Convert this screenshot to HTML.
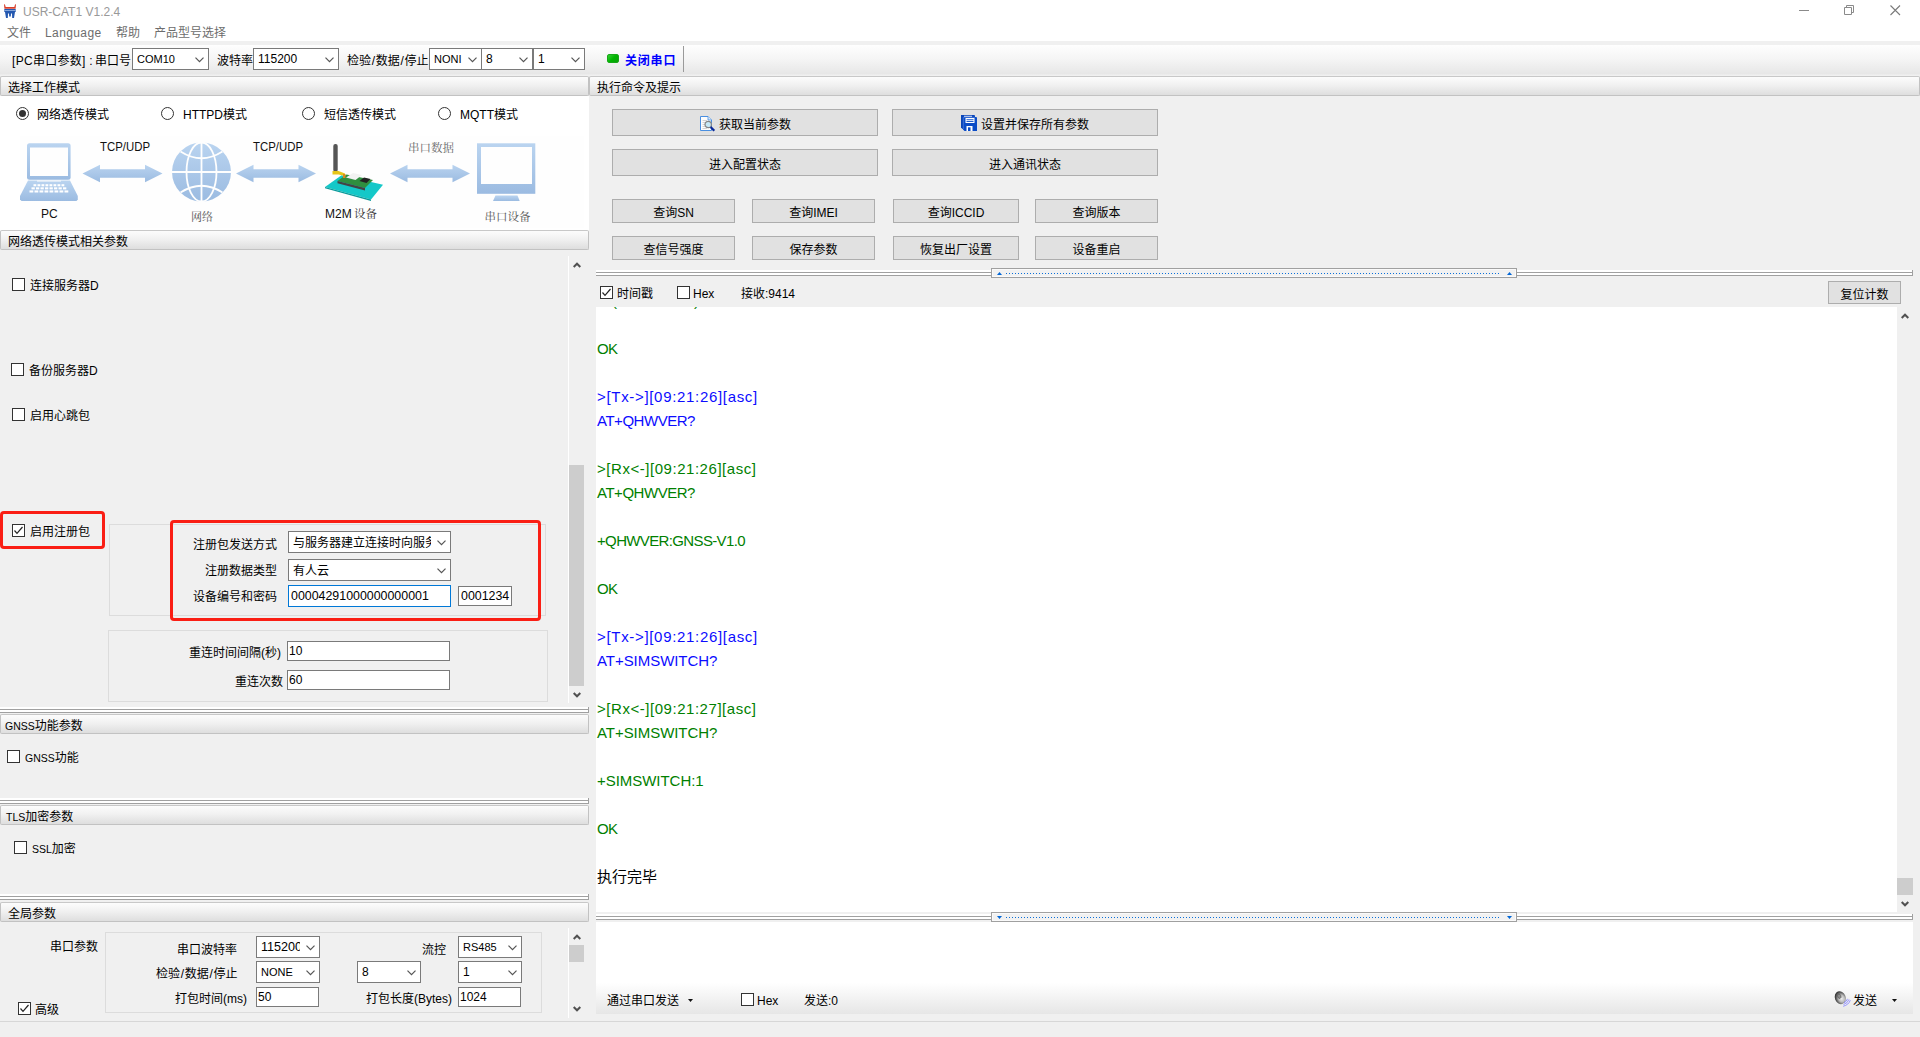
<!DOCTYPE html>
<html lang="zh-CN">
<head>
<meta charset="utf-8">
<title>USR-CAT1 V1.2.4</title>
<style>
*{box-sizing:border-box;margin:0;padding:0}
html,body{width:1920px;height:1037px;overflow:hidden;background:#f0f0f0}
body{position:relative;font-family:"Liberation Sans","Noto Sans CJK SC",sans-serif;font-size:12px;color:#000;line-height:14px}
.l{font-size:11px}
.d{font-size:12.5px}
.a{position:absolute;white-space:nowrap}
.t{position:absolute;white-space:nowrap;height:14px;line-height:14px}
.hdr{position:absolute;height:20px;border:1px solid #c2c2c2;border-top-color:#c8c8c8;border-radius:2px;background:linear-gradient(#fcfcfc,#f1f1f1 45%,#dedede);line-height:21px;padding-top:1px;white-space:nowrap;overflow:hidden}
.dbl{position:absolute;height:6px;border-right:1px solid #a0a0a0;background:linear-gradient(#fff 0,#fff 2px,#a0a0a0 2px,#a0a0a0 3px,#fff 3px,#fff 5px,#a0a0a0 5px,#a0a0a0 6px)}
.cb{position:absolute;width:13px;height:13px;border:1px solid #333;background:#fff}
.cb svg{position:absolute;left:0;top:0}
.rd{position:absolute;width:13px;height:13px;border:1px solid #333;border-radius:50%;background:#fff}
.rd.on:after{content:"";position:absolute;left:2px;top:2px;width:7px;height:7px;border-radius:50%;background:#333}
.sel{position:absolute;border:1px solid #7a7a7a;background:#fff;padding-left:4px;white-space:nowrap;overflow:hidden}
.sel svg{position:absolute;right:4px;top:8px}
.st{display:block;overflow:hidden;margin-right:19px;height:100%}
.inp{position:absolute;border:1px solid #7a7a7a;background:#fff;padding-left:2px;white-space:nowrap;overflow:hidden}
.btn{position:absolute;border:1px solid #adadad;background:#e1e1e1;text-align:center;white-space:nowrap}
.grp{position:absolute;border:1px solid #dcdcdc}
.log{position:absolute;left:597px;font-size:15px;line-height:24px;height:24px;white-space:nowrap}
.b{color:#0c0cff}.g{color:#008000}
</style>
</head>
<body>
<div class="a" style="left:0px;top:0px;width:1920px;height:41px;background:#fff"></div>
<svg class="a" style="left:4px;top:4px" width="12" height="14" viewBox="0 0 12 14"><path d="M0 0Q1.200 0 1.700 3H10.300Q10.800 0 12 0L11.600 4.700H0.400Z" fill="#d8402c"/><path d="M0.300 5H11.700V8H11L10 14H8.200L8 9.500H7L6.800 12.500H5.200L5 9.500H4L3.800 14H2L1 8H0.300Z" fill="#2458b0"/><rect x="0.500" y="6.200" width="11" height="0.800" fill="#9dbbe6"/></svg>
<div class="t" style="left:23px;top:5px;color:#999">USR-CAT1 V1.2.4</div>
<svg class="a" style="left:1799px;top:5px" width="102" height="11" viewBox="0 0 102 11" fill="none" stroke="#8a8a8a" stroke-width="1"><path d="M0 5.500H10"/><path d="M45.500 2.500H52.500V9.500H45.500Z M47.500 2.500V0.500H54.500V7.500H52.500"/><path d="M91.500 0.500L101 10M101 0.500L91.500 10" stroke="#7a7a7a" stroke-width="1.100"/></svg>
<div class="t" style="left:7px;top:26px;color:#6d6d6d">文件</div>
<div class="t" style="left:45px;top:26px;color:#6d6d6d;letter-spacing:0.4px">Language</div>
<div class="t" style="left:116px;top:26px;color:#6d6d6d">帮助</div>
<div class="t" style="left:154px;top:26px;color:#6d6d6d">产品型号选择</div>
<div class="a" style="left:0px;top:45px;width:1920px;height:31px;background:linear-gradient(#fefefe,#f5f5f5 45%,#e7e7e7 92%,#f2f2f2)"></div>
<div class="t" style="left:12px;top:54px;letter-spacing:0.3px">[PC串口参数] :</div>
<div class="t" style="left:95px;top:54px;">串口号</div>
<div class="sel" style="left:132px;top:48px;width:77px;height:22px;line-height:20px"><span class="st"><span style="font-size:11px">COM10</span></span><svg width="9" height="6" viewBox="0 0 9 6"><path d="M0.5 0.700L4.500 4.700L8.500 0.700" fill="none" stroke="#555" stroke-width="1.200"/></svg></div>
<div class="t" style="left:217px;top:54px;">波特率</div>
<div class="sel" style="left:253px;top:48px;width:86px;height:22px;line-height:20px"><span class="st">115200</span><svg width="9" height="6" viewBox="0 0 9 6"><path d="M0.5 0.700L4.500 4.700L8.500 0.700" fill="none" stroke="#555" stroke-width="1.200"/></svg></div>
<div class="t" style="left:347px;top:54px;">检验<span style="padding:0 0.7px">/</span>数据<span style="padding:0 0.7px">/</span>停止</div>
<div class="sel" style="left:429px;top:48px;width:53px;height:22px;line-height:20px"><span class="st"><span style="font-size:11px">NONI</span></span><svg width="9" height="6" viewBox="0 0 9 6"><path d="M0.5 0.700L4.500 4.700L8.500 0.700" fill="none" stroke="#555" stroke-width="1.200"/></svg></div>
<div class="sel" style="left:481px;top:48px;width:52px;height:22px;line-height:20px"><span class="st">8</span><svg width="9" height="6" viewBox="0 0 9 6"><path d="M0.5 0.700L4.500 4.700L8.500 0.700" fill="none" stroke="#555" stroke-width="1.200"/></svg></div>
<div class="sel" style="left:533px;top:48px;width:52px;height:22px;line-height:20px"><span class="st">1</span><svg width="9" height="6" viewBox="0 0 9 6"><path d="M0.5 0.700L4.500 4.700L8.500 0.700" fill="none" stroke="#555" stroke-width="1.200"/></svg></div>
<div class="a" style="left:607px;top:54px;width:12px;height:9px;border-radius:2px;background:linear-gradient(135deg,#35d035,#00b400 50%,#0aa00a);border:1px solid #18a818"></div>
<div class="t" style="left:625px;top:54px;color:#0000ff;font-weight:bold;letter-spacing:0.8px">关闭串口</div>
<div class="a" style="left:683px;top:46px;width:1px;height:26px;background:#9a9a9a"></div>
<div class="a" style="left:0px;top:96px;width:589px;height:135px;background:#fff"></div>
<div class="hdr" style="left:0px;top:76px;width:589px;padding-left:7px">选择工作模式</div>
<div class="rd on" style="left:16px;top:107px"></div>
<div class="t" style="left:37px;top:108px;">网络透传模式</div>
<div class="rd" style="left:161px;top:107px"></div>
<div class="t" style="left:183px;top:108px;">HTTPD模式</div>
<div class="rd" style="left:302px;top:107px"></div>
<div class="t" style="left:324px;top:108px;">短信透传模式</div>
<div class="rd" style="left:438px;top:107px"></div>
<div class="t" style="left:460px;top:108px;">MQTT模式</div>
<svg class="a" style="left:20px;top:136px" width="564" height="92" viewBox="20 136 564 92">
<defs><linearGradient id="gb" x1="0" y1="0" x2="0" y2="1"><stop offset="0" stop-color="#bad4f0"/><stop offset="1" stop-color="#9bbbe1"/></linearGradient></defs>
<rect x="20" y="136" width="564" height="92" fill="#fefefe"/>
<rect x="27" y="143.300" width="43.600" height="36.400" rx="2.500" fill="url(#gb)"/>
<rect x="30" y="147.500" width="38" height="28.500" fill="#fefefe"/>
<path d="M28 180.500H70L77.800 196V199.500L76.500 201H21.500L20 199.500V196Z" fill="url(#gb)"/>
<rect x="37" y="180.500" width="24" height="1" fill="#fefefe"/>
<rect x="33.5" y="184.2" width="2.8" height="2.100" fill="#fff"/><rect x="37.5" y="184.2" width="2.8" height="2.100" fill="#fff"/><rect x="41.5" y="184.2" width="2.8" height="2.100" fill="#fff"/><rect x="45.5" y="184.2" width="2.8" height="2.100" fill="#fff"/><rect x="49.5" y="184.2" width="2.8" height="2.100" fill="#fff"/><rect x="53.5" y="184.2" width="2.8" height="2.100" fill="#fff"/><rect x="57.5" y="184.2" width="2.8" height="2.100" fill="#fff"/><rect x="61.5" y="184.2" width="2.8" height="2.100" fill="#fff"/><rect x="31.5" y="187.3" width="3.3" height="2.100" fill="#fff"/><rect x="36.0" y="187.3" width="3.3" height="2.100" fill="#fff"/><rect x="40.5" y="187.3" width="3.3" height="2.100" fill="#fff"/><rect x="45.0" y="187.3" width="3.3" height="2.100" fill="#fff"/><rect x="49.5" y="187.3" width="3.3" height="2.100" fill="#fff"/><rect x="54.0" y="187.3" width="3.3" height="2.100" fill="#fff"/><rect x="58.5" y="187.3" width="3.3" height="2.100" fill="#fff"/><rect x="63.0" y="187.3" width="3.3" height="2.100" fill="#fff"/><rect x="29.5" y="190.4" width="3.8" height="2.100" fill="#fff"/><rect x="34.5" y="190.4" width="3.8" height="2.100" fill="#fff"/><rect x="39.5" y="190.4" width="3.8" height="2.100" fill="#fff"/><rect x="44.5" y="190.4" width="3.8" height="2.100" fill="#fff"/><rect x="49.5" y="190.4" width="3.8" height="2.100" fill="#fff"/><rect x="54.5" y="190.4" width="3.8" height="2.100" fill="#fff"/><rect x="59.5" y="190.4" width="3.8" height="2.100" fill="#fff"/><rect x="64.5" y="190.4" width="3.8" height="2.100" fill="#fff"/>
<text x="41" y="217.500" font-family="Liberation Sans, sans-serif" font-size="12" fill="#111">PC</text>
<text x="100" y="151" font-family="Liberation Sans, sans-serif" font-size="12" fill="#111" textLength="50" lengthAdjust="spacingAndGlyphs">TCP/UDP</text>
<path d="M82.5 173.5L100.0 164.7V169.2H145.0V164.7L162.5 173.5L145.0 182.3V177.8H100.0V182.3Z" fill="url(#gb)"/>
<circle cx="201.500" cy="172" r="29.500" fill="url(#gb)"/>
<g fill="none" stroke="#fefefe" stroke-width="1.800">
<path d="M201.500 142V202M171.500 172H231.500"/>
<ellipse cx="201.500" cy="172" rx="15" ry="29.500"/>
<path d="M180.500 151.500Q201.500 165 222.500 151.500M180.500 192.500Q201.500 179 222.500 192.500"/>
</g>
<text x="191" y="221" font-family="Noto Serif CJK SC, serif" font-size="11" fill="#555">网络</text>
<text x="253" y="151" font-family="Liberation Sans, sans-serif" font-size="12" fill="#111" textLength="50" lengthAdjust="spacingAndGlyphs">TCP/UDP</text>
<path d="M236 173.5L253.5 164.7V169.2H298.5V164.7L316 173.5L298.5 182.3V177.8H253.5V182.3Z" fill="url(#gb)"/>
<path d="M325 187L341.500 175.300L383 184.700L371 199.500Z" fill="#14c8c8"/>
<path d="M325 187L371 199.500L371 201L325 188.300Z" fill="#0b9a9a"/>
<path d="M337.500 181L346.500 174.500L373 180L365 188Z" fill="#2f8f3f"/>
<path d="M337.500 181L365 188V190.500L337.500 183.300Z" fill="#444"/>
<path d="M346 177.500L353 173L362 175L355.500 180Z" fill="#f2f2f2"/>
<path d="M359.500 181L364 177.500L370.500 179L366.500 183Z" fill="#222"/>
<rect x="333.300" y="144" width="4.400" height="28" rx="2" fill="#555"/>
<path d="M332.500 171H338.500L345 173.500V176L338.500 174.500H332.500Z" fill="#e6c619"/>
<rect x="343" y="174" width="2.500" height="4" fill="#d98a1d"/>
<text x="325" y="217.500" font-family="Liberation Sans, sans-serif" font-size="12" fill="#111">M2M</text>
<text x="354" y="217.500" font-family="Noto Serif CJK SC, serif" font-size="11.500" fill="#333">设备</text>
<text x="408" y="151.700" font-family="Noto Serif CJK SC, serif" font-size="11.500" fill="#666">串口数据</text>
<path d="M390 173.5L407.5 164.7V169.2H452.5V164.7L470 173.5L452.5 182.3V177.8H407.5V182.3Z" fill="url(#gb)"/>
<rect x="477" y="143.300" width="58.300" height="50.500" fill="url(#gb)"/>
<rect x="481" y="147" width="51" height="37" fill="#fefefe"/>
<path d="M495.500 195.600H517.500L519.700 201H493Z" fill="url(#gb)"/>
<text x="484.500" y="220.700" font-family="Noto Serif CJK SC, serif" font-size="11.500" fill="#555">串口设备</text>
</svg>
<div class="hdr" style="left:0px;top:230px;width:589px;padding-left:7px">网络透传模式相关参数</div>
<div class="a" style="left:568px;top:256px;width:1px;height:447px;background:#fff"></div>
<div class="a" style="left:569px;top:256px;width:17px;height:447px;background:#f0f0f0"></div>
<svg class="a" style="left:573px;top:262px" width="8" height="6" viewBox="0 0 8 6"><path d="M0.700 5L4 1.700L7.300 5" fill="none" stroke="#505050" stroke-width="2"/></svg>
<svg class="a" style="left:573px;top:692px" width="8" height="6" viewBox="0 0 8 6"><path d="M0.700 1L4 4.300L7.300 1" fill="none" stroke="#505050" stroke-width="2"/></svg>
<div class="a" style="left:569px;top:465px;width:15px;height:221px;background:#cdcdcd"></div>
<div class="cb" style="left:12px;top:278px"></div>
<div class="t" style="left:30px;top:279px;">连接服务器D</div>
<div class="cb" style="left:11px;top:363px"></div>
<div class="t" style="left:29px;top:364px;">备份服务器D</div>
<div class="cb" style="left:12px;top:408px"></div>
<div class="t" style="left:30px;top:409px;">启用心跳包</div>
<div class="grp" style="left:109px;top:524px;width:437px;height:92px"></div>
<div class="cb" style="left:12px;top:524px"><svg width="11" height="11" viewBox="0 0 11 11"><path d="M1.5 5.500L4 8.300L9.500 2" fill="none" stroke="#222" stroke-width="1.200"/></svg></div>
<div class="t" style="left:30px;top:525px;">启用注册包</div>
<div class="a" style="left:0px;top:511px;width:105px;height:38px;border:3px solid #fa1e14;border-radius:4px"></div>
<div class="a" style="left:170px;top:520px;width:371px;height:101px;border:3px solid #fa1e14;border-radius:4px"></div>
<div class="t" style="left:193px;top:538px;">注册包发送方式</div>
<div class="sel" style="left:288px;top:531px;width:163px;height:22px;line-height:20px"><span class="st"><span style="position:relative;top:1px">与服务器建立连接时向服务</span></span><svg width="9" height="6" viewBox="0 0 9 6"><path d="M0.5 0.700L4.500 4.700L8.500 0.700" fill="none" stroke="#555" stroke-width="1.200"/></svg></div>
<div class="t" style="left:205px;top:564px;">注册数据类型</div>
<div class="sel" style="left:288px;top:559px;width:163px;height:22px;line-height:20px"><span class="st"><span style="position:relative;top:1px">有人云</span></span><svg width="9" height="6" viewBox="0 0 9 6"><path d="M0.5 0.700L4.500 4.700L8.500 0.700" fill="none" stroke="#555" stroke-width="1.200"/></svg></div>
<div class="t" style="left:193px;top:590px;">设备编号和密码</div>
<div class="inp" style="left:288px;top:585px;width:163px;height:22px;line-height:20px;border-color:#0078d7"><span style="font-size:12.4px">00004291000000000001</span></div>
<div class="inp" style="left:458px;top:586px;width:54px;height:20px;line-height:18px;"><span style="font-size:12.4px">0001234</span></div>
<div class="grp" style="left:108px;top:630px;width:440px;height:72px"></div>
<div class="t" style="left:189px;top:646px;">重连时间间隔(秒)</div>
<div class="inp" style="left:287px;top:641px;width:163px;height:20px;line-height:18px;padding-left:1px">10</div>
<div class="t" style="left:235px;top:675px;">重连次数</div>
<div class="inp" style="left:287px;top:670px;width:163px;height:20px;line-height:18px;padding-left:1px">60</div>
<div class="dbl" style="left:0;top:707px;width:589px"></div>
<div class="hdr" style="left:0px;top:714px;width:589px;padding-left:4px"><span style="font-size:10.5px">GNSS</span>功能参数</div>
<div class="cb" style="left:7px;top:750px"></div>
<div class="t" style="left:25px;top:751px;"><span style="font-size:10.5px">GNSS</span>功能</div>
<div class="dbl" style="left:0;top:798px;width:589px"></div>
<div class="hdr" style="left:0px;top:805px;width:589px;padding-left:5px"><span style="font-size:10.5px">TLS</span>加密参数</div>
<div class="cb" style="left:14px;top:841px"></div>
<div class="t" style="left:32px;top:842px;"><span style="font-size:10.5px">SSL</span>加密</div>
<div class="dbl" style="left:0;top:894px;width:589px"></div>
<div class="hdr" style="left:0px;top:902px;width:589px;padding-left:7px">全局参数</div>
<div class="t" style="left:50px;top:940px;">串口参数</div>
<div class="grp" style="left:105px;top:932px;width:437px;height:81px"></div>
<div class="t" style="left:177px;top:943px;">串口波特率</div>
<div class="sel" style="left:256px;top:936px;width:64px;height:22px;line-height:20px"><span class="st"><span style="font-size:12.6px">115200</span></span><svg width="9" height="6" viewBox="0 0 9 6"><path d="M0.5 0.700L4.500 4.700L8.500 0.700" fill="none" stroke="#555" stroke-width="1.200"/></svg></div>
<div class="t" style="left:422px;top:943px;">流控</div>
<div class="sel" style="left:458px;top:936px;width:64px;height:22px;line-height:20px"><span class="st"><span style="font-size:11px">RS485</span></span><svg width="9" height="6" viewBox="0 0 9 6"><path d="M0.5 0.700L4.500 4.700L8.500 0.700" fill="none" stroke="#555" stroke-width="1.200"/></svg></div>
<div class="t" style="left:156px;top:967px;">检验<span style="padding:0 0.7px">/</span>数据<span style="padding:0 0.7px">/</span>停止</div>
<div class="sel" style="left:256px;top:961px;width:64px;height:22px;line-height:20px"><span class="st"><span style="font-size:11px">NONE</span></span><svg width="9" height="6" viewBox="0 0 9 6"><path d="M0.5 0.700L4.500 4.700L8.500 0.700" fill="none" stroke="#555" stroke-width="1.200"/></svg></div>
<div class="sel" style="left:357px;top:961px;width:64px;height:22px;line-height:20px"><span class="st">8</span><svg width="9" height="6" viewBox="0 0 9 6"><path d="M0.5 0.700L4.500 4.700L8.500 0.700" fill="none" stroke="#555" stroke-width="1.200"/></svg></div>
<div class="sel" style="left:458px;top:961px;width:64px;height:22px;line-height:20px"><span class="st">1</span><svg width="9" height="6" viewBox="0 0 9 6"><path d="M0.5 0.700L4.500 4.700L8.500 0.700" fill="none" stroke="#555" stroke-width="1.200"/></svg></div>
<div class="t" style="left:175px;top:992px;">打包时间(ms)</div>
<div class="inp" style="left:256px;top:987px;width:63px;height:20px;line-height:18px;padding-left:1px">50</div>
<div class="t" style="left:366px;top:992px;">打包长度(Bytes)</div>
<div class="inp" style="left:458px;top:987px;width:63px;height:20px;line-height:18px;padding-left:1px">1024</div>
<div class="cb" style="left:18px;top:1002px"><svg width="11" height="11" viewBox="0 0 11 11"><path d="M1.5 5.500L4 8.300L9.500 2" fill="none" stroke="#222" stroke-width="1.200"/></svg></div>
<div class="t" style="left:35px;top:1003px;">高级</div>
<div class="a" style="left:568px;top:928px;width:1px;height:90px;background:#fff"></div>
<div class="a" style="left:569px;top:928px;width:17px;height:89px;background:#f0f0f0"></div>
<svg class="a" style="left:573px;top:934px" width="8" height="6" viewBox="0 0 8 6"><path d="M0.700 5L4 1.700L7.300 5" fill="none" stroke="#505050" stroke-width="2"/></svg>
<svg class="a" style="left:573px;top:1006px" width="8" height="6" viewBox="0 0 8 6"><path d="M0.700 1L4 4.300L7.300 1" fill="none" stroke="#505050" stroke-width="2"/></svg>
<div class="a" style="left:569px;top:945px;width:15px;height:17px;background:#cdcdcd"></div>
<div class="a" style="left:0px;top:1021px;width:1920px;height:1px;background:#d7d7d7"></div>
<div class="hdr" style="left:589px;top:76px;width:1331px;padding-left:7px">执行命令及提示</div>
<div class="btn" style="left:612px;top:109px;width:266px;height:27px;line-height:31px;padding-left:20px"><svg style="position:absolute;left:87px;top:6px" width="16" height="16" viewBox="0 0 16 16"><path d="M0.500 0.500H8L11.500 4V14.500H0.500Z" fill="#fdfdfd" stroke="#4a8fe0"/><path d="M8 0.500V4H11.500" fill="#dce9fa" stroke="#4a8fe0" stroke-width="0.800"/><path d="M2.500 4.500H7M2.500 6.500H6M2.500 8.500H5M2.500 10.500H5M2.500 12.500H7" stroke="#c9c9c9" stroke-width="0.800"/><circle cx="8.200" cy="8.500" r="3.200" fill="#c6e9f7" stroke="#858585" stroke-width="1.200"/><path d="M10.600 11L14.300 14.700" stroke="#0a2a9a" stroke-width="2.300"/></svg>获取当前参数</div>
<div class="btn" style="left:892px;top:109px;width:266px;height:27px;line-height:31px;padding-left:20px"><svg style="position:absolute;left:68px;top:5px" width="16" height="16" viewBox="0 0 16 16"><path d="M0 0H13.500L14 0.500V14H1.500L0 12.500Z" fill="#0a45b8"/><rect x="3" y="0.800" width="8" height="0.900" fill="#fff"/><path d="M2 2H15.500L16 2.500V16H3.500L2 14.500Z" fill="#0b4cc6"/><path d="M2.300 14.500V2.300H14" fill="none" stroke="#5d8ae6" stroke-width="0.600"/><rect x="4.500" y="3" width="9" height="5" fill="#fff"/><rect x="5.500" y="4.300" width="7" height="0.900" fill="#0b4cc6"/><rect x="5.500" y="6" width="7" height="0.900" fill="#0b4cc6"/><rect x="5.500" y="11" width="6" height="5" fill="#fff"/><rect x="7" y="12.300" width="2.500" height="3.700" fill="#0b4cc6"/></svg>设置并保存所有参数</div>
<div class="btn" style="left:612px;top:149px;width:266px;height:27px;line-height:31px;padding-left:0px">进入配置状态</div>
<div class="btn" style="left:892px;top:149px;width:266px;height:27px;line-height:31px;padding-left:0px">进入通讯状态</div>
<div class="btn" style="left:612px;top:199px;width:123px;height:24px;line-height:26px;padding-left:0px">查询SN</div>
<div class="btn" style="left:612px;top:236px;width:123px;height:24px;line-height:26px;padding-left:0px">查信号强度</div>
<div class="btn" style="left:752px;top:199px;width:123px;height:24px;line-height:26px;padding-left:0px">查询IMEI</div>
<div class="btn" style="left:752px;top:236px;width:123px;height:24px;line-height:26px;padding-left:0px">保存参数</div>
<div class="btn" style="left:893px;top:199px;width:126px;height:24px;line-height:26px;padding-left:0px">查询ICCID</div>
<div class="btn" style="left:893px;top:236px;width:126px;height:24px;line-height:26px;padding-left:0px">恢复出厂设置</div>
<div class="btn" style="left:1035px;top:199px;width:123px;height:24px;line-height:26px;padding-left:0px">查询版本</div>
<div class="btn" style="left:1035px;top:236px;width:123px;height:24px;line-height:26px;padding-left:0px">设备重启</div>
<div class="dbl" style="left:596px;top:270px;width:1317px"></div>
<div class="a" style="left:991px;top:268px;width:526px;height:10px;border:1px solid #a0a0a0;background:#f1f1f1;box-shadow:inset 0 0 0 1px #fafafa"></div>
<div class="a" style="left:1006px;top:273px;width:493px;height:1px;background:repeating-linear-gradient(90deg,#0a6fd8 0,#0a6fd8 1px,transparent 1px,transparent 3px)"></div>
<svg class="a" style="left:997px;top:272px" width="5" height="3" viewBox="0 0 5 3"><path d="M0 3L2.500 0L5 3Z" fill="#0066d6"/></svg>
<svg class="a" style="left:1507px;top:272px" width="5" height="3" viewBox="0 0 5 3"><path d="M0 3L2.500 0L5 3Z" fill="#0066d6"/></svg>
<div class="cb" style="left:600px;top:286px"><svg width="11" height="11" viewBox="0 0 11 11"><path d="M1.5 5.500L4 8.300L9.500 2" fill="none" stroke="#222" stroke-width="1.200"/></svg></div>
<div class="t" style="left:617px;top:287px;">时间戳</div>
<div class="cb" style="left:677px;top:286px"></div>
<div class="t" style="left:693px;top:287px;">Hex</div>
<div class="t" style="left:741px;top:287px;">接收:9414</div>
<div class="btn" style="left:1828px;top:281px;width:73px;height:23px;line-height:27px;padding-left:0px">复位计数</div>
<div class="a" style="left:596px;top:307px;width:1317px;height:605px;background:#fff"></div>
<div class="a" style="left:596px;top:307px;width:1300px;height:4px;overflow:hidden"><div class="log g" style="left:16px;top:-18px">(</div><div class="log g" style="left:98px;top:-18px">)</div></div>
<div class="a" style="left:1897px;top:307px;width:16px;height:605px;background:#f0f0f0"></div>
<svg class="a" style="left:1901px;top:313px" width="8" height="6" viewBox="0 0 8 6"><path d="M0.700 5L4 1.700L7.300 5" fill="none" stroke="#505050" stroke-width="2"/></svg>
<svg class="a" style="left:1901px;top:901px" width="8" height="6" viewBox="0 0 8 6"><path d="M0.700 1L4 4.300L7.300 1" fill="none" stroke="#505050" stroke-width="2"/></svg>
<div class="a" style="left:1897px;top:878px;width:16px;height:17px;background:#cdcdcd"></div>
<div class="log g" style="top:337px;letter-spacing:-0.65px">OK</div>
<div class="log b" style="top:385px;letter-spacing:0.68px">&gt;[Tx-&gt;][09:21:26][asc]</div>
<div class="log b" style="top:409px;letter-spacing:-0.47px">AT+QHWVER?</div>
<div class="log g" style="top:457px;letter-spacing:0.54px">&gt;[Rx&lt;-][09:21:26][asc]</div>
<div class="log g" style="top:481px;letter-spacing:-0.47px">AT+QHWVER?</div>
<div class="log g" style="top:529px;letter-spacing:-0.64px">+QHWVER:GNSS-V1.0</div>
<div class="log g" style="top:577px;letter-spacing:-0.65px">OK</div>
<div class="log b" style="top:625px;letter-spacing:0.68px">&gt;[Tx-&gt;][09:21:26][asc]</div>
<div class="log b" style="top:649px;letter-spacing:-0.05px">AT+SIMSWITCH?</div>
<div class="log g" style="top:697px;letter-spacing:0.54px">&gt;[Rx&lt;-][09:21:27][asc]</div>
<div class="log g" style="top:721px;letter-spacing:-0.05px">AT+SIMSWITCH?</div>
<div class="log g" style="top:769px;letter-spacing:-0.04px">+SIMSWITCH:1</div>
<div class="log g" style="top:817px;letter-spacing:-0.65px">OK</div>
<div class="log " style="top:865px">执行完毕</div>
<div class="dbl" style="left:596px;top:914px;width:1317px"></div>
<div class="a" style="left:991px;top:912px;width:526px;height:10px;border:1px solid #a0a0a0;background:#f1f1f1;box-shadow:inset 0 0 0 1px #fafafa"></div>
<div class="a" style="left:1006px;top:917px;width:493px;height:1px;background:repeating-linear-gradient(90deg,#0a6fd8 0,#0a6fd8 1px,transparent 1px,transparent 3px)"></div>
<svg class="a" style="left:997px;top:916px" width="5" height="3" viewBox="0 0 5 3"><path d="M0 0H5L2.500 3Z" fill="#0066d6"/></svg>
<svg class="a" style="left:1507px;top:916px" width="5" height="3" viewBox="0 0 5 3"><path d="M0 0H5L2.500 3Z" fill="#0066d6"/></svg>
<div class="a" style="left:596px;top:922px;width:1317px;height:92px;background:linear-gradient(#fff 0,#fff 66%,#e6e6e6 100%)"></div>
<div class="t" style="left:607px;top:994px;">通过串口发送</div>
<svg class="a" style="left:688px;top:999px" width="5" height="3" viewBox="0 0 5 3"><path d="M0 0H5L2.500 3Z" fill="#111"/></svg>
<div class="cb" style="left:741px;top:993px"></div>
<div class="t" style="left:757px;top:994px;">Hex</div>
<div class="t" style="left:804px;top:994px;">发送:0</div>
<svg class="a" style="left:1832px;top:989px" width="20" height="20" viewBox="0 0 20 20"><defs><radialGradient id="sp" cx="0.580" cy="0.600" r="0.600"><stop offset="0" stop-color="#efefef"/><stop offset="0.450" stop-color="#bdbdbd"/><stop offset="0.750" stop-color="#6a6a6a"/><stop offset="1" stop-color="#2e2e2e"/></radialGradient></defs><ellipse cx="8.300" cy="8.700" rx="5.400" ry="6.600" transform="rotate(-22 8.300 8.700)" fill="url(#sp)"/><ellipse cx="7.300" cy="7.300" rx="1.600" ry="2.200" transform="rotate(-22 7.300 7.300)" fill="#8d8d8d" stroke="#555" stroke-width="0.600"/><path d="M12 13.800Q14.600 12.400 15.500 9.800M11.500 15.600Q15.800 14 17 10.400M11.200 17.300Q16.800 15.800 18.300 11.200" fill="none" stroke="#8a8aff" stroke-width="0.900"/></svg>
<div class="t" style="left:1853px;top:994px;">发送</div>
<svg class="a" style="left:1892px;top:999px" width="5" height="3" viewBox="0 0 5 3"><path d="M0 0H5L2.500 3Z" fill="#111"/></svg>
</body>
</html>
